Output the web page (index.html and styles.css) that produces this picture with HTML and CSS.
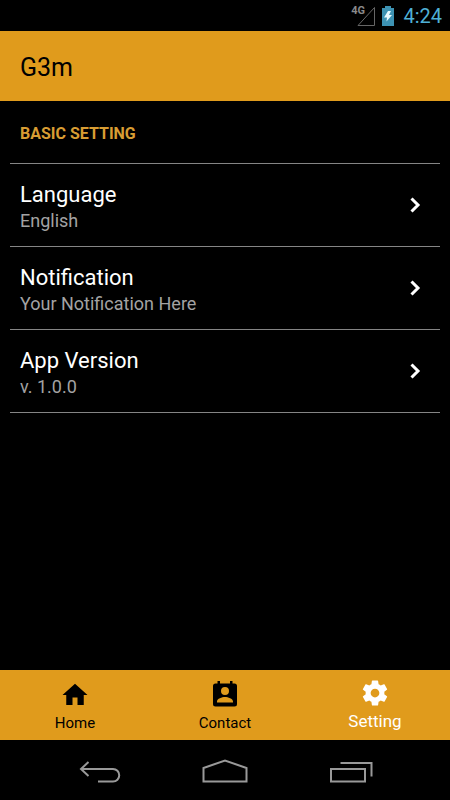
FILE: index.html
```html
<!DOCTYPE html>
<html lang="en">
<head>
<meta charset="utf-8">
<meta name="viewport" content="width=device-width, initial-scale=1">
<title>G3m</title>
<link rel="stylesheet" href="styles.css">
</head>
<body>
<div class="status">
  <svg class="signal" width="26" height="24" viewBox="0 0 26 24" aria-hidden="true"><path d="M7 21.500H23.500V3.500Z" fill="none" stroke="#666"/></svg>
  <span class="network">4G</span>
  <svg class="battery" width="14" height="20" viewBox="0 0 14 20" aria-hidden="true"><path d="M4 0h6v2h3v18H1V2h3z" fill="#3d92b2"/><path d="M7 5 3 11.500h3L5.500 15.500 11 9H8l2-4z" fill="#e8faff"/></svg>
  <time class="clock">4:24</time>
</div>
<header class="header"><h1 class="title">G3m</h1></header>
<main class="content">
  <h2 class="section">BASIC SETTING</h2>
  <a class="row" href="#language">
    <span class="texts"><span class="name">Language</span><span class="value">English</span></span>
    <svg class="chevron" width="12" height="18" viewBox="0 0 12 18" aria-hidden="true"><path d="M2.500 2.500 9 9l-6.500 6.500"/></svg>
  </a>
  <a class="row" href="#notification">
    <span class="texts"><span class="name">Notification</span><span class="value">Your Notification Here</span></span>
    <svg class="chevron" width="12" height="18" viewBox="0 0 12 18" aria-hidden="true"><path d="M2.500 2.500 9 9l-6.500 6.500"/></svg>
  </a>
  <a class="row" href="#version">
    <span class="texts"><span class="name">App Version</span><span class="value">v. 1.0.0</span></span>
    <svg class="chevron" width="12" height="18" viewBox="0 0 12 18" aria-hidden="true"><path d="M2.500 2.500 9 9l-6.500 6.500"/></svg>
  </a>
</main>
<nav class="tabs">
  <a class="tab" href="#home">
    <svg width="30" height="30" viewBox="0 0 24 24" aria-hidden="true"><path d="M10 20v-6h4v6h5v-8h3L12 3 2 12h3v8z"/></svg>
    <span>Home</span>
  </a>
  <a class="tab" href="#contact">
    <svg width="30" height="30" viewBox="0 0 30 30" aria-hidden="true"><path fill-rule="evenodd" d="M7.500 1H10v2.500h10V1h2.500v2.500H24.500A2.500 2.500 0 0 1 27 6v18a2.500 2.500 0 0 1-2.500 2.500h-19A2.500 2.500 0 0 1 3 24V6a2.500 2.500 0 0 1 2.500-2.500h2zM15 7a4 4 0 1 0 0 8 4 4 0 0 0 0-8zM7 22.500h16v-1c0-3-5-4.500-8-4.500s-8 1.500-8 4.500z"/></svg>
    <span>Contact</span>
  </a>
  <a class="tab active" href="#setting" aria-current="page">
    <svg width="30" height="30" viewBox="0 0 24 24" aria-hidden="true"><path d="M19.430 12.980c.04-.32.07-.64.07-.98s-.03-.66-.07-.98l2.110-1.650c.19-.15.24-.42.12-.64l-2-3.460c-.12-.22-.39-.3-.61-.22l-2.490 1c-.52-.4-1.080-.73-1.690-.98l-.38-2.650C14.460 2.180 14.250 2 14 2h-4c-.25 0-.46.18-.49.42l-.38 2.650c-.61.25-1.170.59-1.690.98l-2.490-1c-.23-.09-.49 0-.61.22l-2 3.460c-.13.22-.07.49.12.64l2.110 1.650c-.04.32-.07.65-.07.98s.03.66.07.98l-2.110 1.650c-.19.15-.24.42-.12.64l2 3.460c.12.22.39.3.61.22l2.490-1c.52.4 1.080.73 1.690.98l.38 2.650c.03.24.24.42.49.42h4c.25 0 .46-.18.49-.42l.38-2.650c.61-.25 1.170-.59 1.690-.98l2.490 1c.23.09.49 0 .61-.22l2-3.460c.12-.22.07-.49-.12-.64l-2.110-1.650zM12 15.500c-1.930 0-3.500-1.570-3.500-3.500s1.570-3.500 3.500-3.500 3.500 1.570 3.500 3.500-1.570 3.500-3.500 3.500z"/></svg>
    <span>Setting</span>
  </a>
</nav>
<div class="system">
  <button class="key" type="button" aria-label="Back"><svg width="48" height="28" viewBox="0 0 48 28"><path d="M6 12H38a6 6 0 0 1 0 12.500H23M13.500 5l-7.500 7 7.500 7"/></svg></button>
  <button class="key" type="button" aria-label="Home"><svg width="48" height="28" viewBox="0 0 48 28"><path d="M2.500 24.500V11L24 3.500l21.500 7.500v13.500z"/></svg></button>
  <button class="key" type="button" aria-label="Recent apps"><svg width="48" height="28" viewBox="0 0 48 28"><path d="M4 12h34v12.500H4zM13.500 6h31v13.500"/></svg></button>
</div>
</body>
</html>
```
FILE: styles.css
```css
* { box-sizing: border-box; }
body {
  margin: 0;
  min-height: 100vh;
  display: flex;
  flex-direction: column;
  background: #000;
  color: #fff;
  font-family: Roboto, "Liberation Sans", sans-serif;
}
a { color: inherit; text-decoration: none; }
svg { display: block; flex: none; }
.status {
  position: relative;
  display: flex;
  align-items: center;
  justify-content: flex-end;
  height: 31px;
  padding-right: 8px;
  color: #4fb0d6;
}
.network {
  position: absolute;
  right: 85px;
  top: 5px;
  color: #8a8a8a;
  font-size: 11px;
  font-weight: 700;
  line-height: 12px;
}
.signal { margin-right: 4px; }
.battery { margin-right: 8px; }
.clock { font-size: 20px; line-height: 30px; }
.header {
  display: flex;
  align-items: center;
  height: 70px;
  padding: 2px 20px 0;
  background: #e09b1c;
  color: #000;
}
.title { margin: 0; font-size: 25px; font-weight: 400; }
.content { flex: 1; padding: 0 10px; }
.section {
  margin: 0;
  padding: 22px 10px 19px;
  border-bottom: 1px solid #858585;
  color: #d89d33;
  font-size: 16px;
  font-weight: 700;
  line-height: 21px;
}
.row {
  display: flex;
  align-items: center;
  justify-content: space-between;
  height: 83px;
  padding: 0 19px 0 10px;
  border-bottom: 1px solid #858585;
}
.texts { display: flex; flex-direction: column; padding-top: 5px; }
.name { font-size: 22px; line-height: 26px; }
.value { color: #a3a3a3; font-size: 18px; line-height: 26px; }
.chevron { fill: none; stroke: #fff; stroke-width: 3; }
.tabs {
  display: flex;
  height: 70px;
  background: #e09b1c;
  color: #000;
  font-size: 15px;
  line-height: 20px;
}
.tab {
  flex: 1;
  display: flex;
  flex-direction: column;
  align-items: center;
  padding-top: 10px;
  gap: 3px;
}
.tab svg { fill: currentColor; }
.active { padding-top: 8px; color: #fff; font-size: 17px; }
.system {
  display: flex;
  justify-content: center;
  gap: 78px;
  height: 60px;
  padding-top: 2px;
}
.key {
  display: flex;
  align-items: center;
  padding: 0;
  border: 0;
  background: none;
}
.key svg { fill: none; stroke: #999; stroke-width: 2; }
```
